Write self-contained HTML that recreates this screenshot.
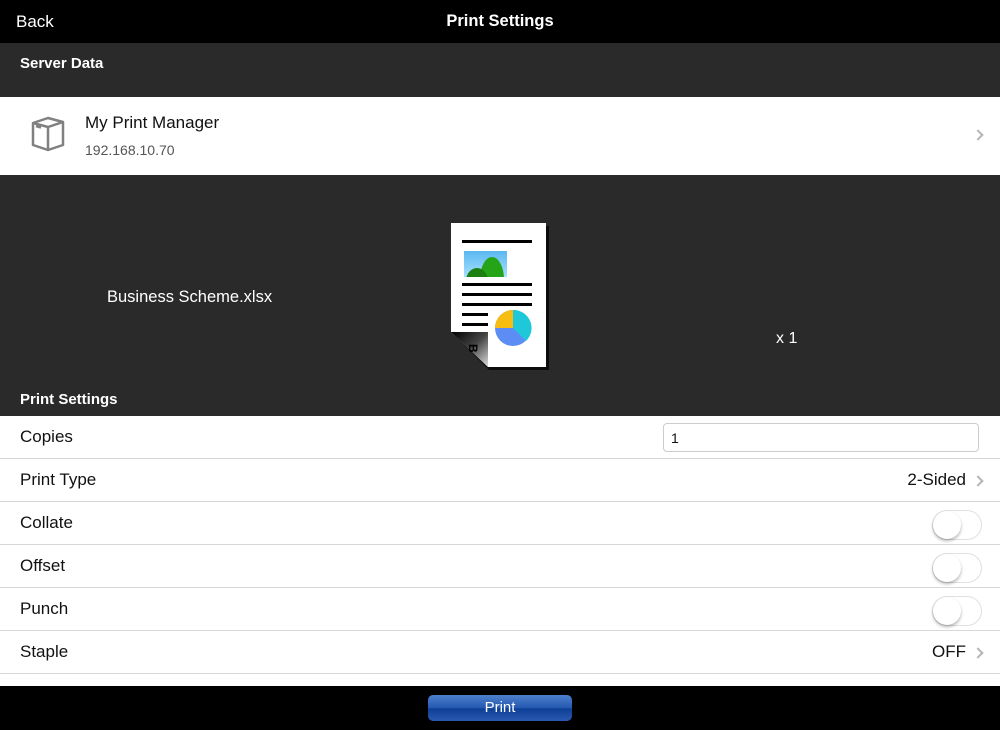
<!DOCTYPE html>
<html><head><style>
*{margin:0;padding:0;box-sizing:border-box}
body{width:1000px;height:730px;overflow:hidden;font-family:"Liberation Sans",sans-serif;background:#282828;position:relative}
.abs{position:absolute}
.top{left:0;top:0;width:1000px;height:43px;background:#000;color:#fff}
.dark{background:#2a2a2a}
.row{position:absolute;left:0;width:1000px;height:43px;background:#fff;border-bottom:1px solid #d8d8d8;font-size:17px;color:#111}
.row .l{position:absolute;left:20px;top:11px}
.tog{position:absolute;right:18px;top:8px;width:50px;height:30px;border:1px solid #e0e0e0;border-radius:15px;background:#fff}
.tog:after{content:"";position:absolute;left:0;top:0;width:28px;height:28px;border-radius:50%;background:#fff;box-shadow:0 2px 3px rgba(0,0,0,.3)}
.chev{position:absolute;width:8px;height:8px;border-right:2px solid #b5b5b5;border-top:2px solid #b5b5b5;transform:rotate(45deg)}
</style></head><body>
<div class="abs top"><div class="abs" style="left:16px;top:12px;font-size:17px">Back</div><div class="abs" style="left:0;width:1000px;top:12px;text-align:center;font-size:16.5px;font-weight:bold">Print Settings</div></div>
<div class="abs dark" style="left:0;top:43px;width:1000px;height:54px"><div class="abs" style="left:20px;top:12px;color:#fff;font-weight:bold;font-size:15px">Server Data</div></div>
<div class="abs" style="left:0;top:97px;width:1000px;height:78px;background:#fff">
<svg class="abs" style="left:30px;top:18px" width="36" height="38" viewBox="0 0 36 38"><g fill="none" stroke="#808080" stroke-width="2.5" stroke-linejoin="round"><path d="M3 8 L18 3 L33 7 L33 30 L18 35 L3 30 Z"/><path d="M3 8 L18 12 L33 7 M18 12 L18 35"/><path d="M6 11 L11 12.5"/></g></svg>
<div class="abs" style="left:85px;top:16px;font-size:17px;color:#111">My Print Manager</div>
<div class="abs" style="left:85px;top:45px;font-size:14px;color:#555">192.168.10.70</div>
<div class="chev" style="left:974px;top:34px"></div></div>
<div class="abs dark" style="left:0;top:175px;width:1000px;height:241px">
<div class="abs" style="left:107px;top:113px;color:#fff;font-size:16.5px">Business Scheme.xlsx</div>
<div class="abs" style="left:776px;top:155px;color:#fff;font-size:16px">x 1</div>
<svg class="abs" style="left:448px;top:46px" width="104" height="150" viewBox="0 0 104 150">
<defs><linearGradient id="f" x1="0" y1="0" x2="1" y2="1"><stop offset="0" stop-color="#000"/><stop offset=".5" stop-color="#444"/><stop offset="1" stop-color="#ddd"/></linearGradient>
<linearGradient id="s" x1="0" y1="0" x2="0" y2="1"><stop offset="0" stop-color="#5ab8f0"/><stop offset="1" stop-color="#a8e0ff"/></linearGradient>
<clipPath id="c"><rect x="16" y="30" width="43" height="26"/></clipPath></defs>
<path d="M6 5 L101 5 L101 149 L41 149 L6 114 Z" fill="#000" opacity=".7"/>
<path d="M3 2 L98 2 L98 146 L40 146 L3 111 Z" fill="#fff"/>
<path d="M3 111 L40 111 L40 146 Z" fill="url(#f)"/>
<rect x="14" y="19" width="70" height="3" fill="#000"/>
<rect x="16" y="30" width="43" height="26" fill="url(#s)"/>
<g clip-path="url(#c)"><ellipse cx="44" cy="58" rx="12" ry="22" fill="#26a418"/><ellipse cx="29" cy="60" rx="11" ry="13" fill="#1c8010"/></g>
<rect x="14" y="62" width="70" height="3" fill="#000"/><rect x="14" y="72" width="70" height="3" fill="#000"/><rect x="14" y="82" width="70" height="3" fill="#000"/>
<rect x="14" y="92" width="26" height="3" fill="#000"/><rect x="14" y="102" width="26" height="3" fill="#000"/>
<circle cx="65" cy="107" r="18" fill="#5b8df5"/><path d="M65 107 L65 89 A18 18 0 0 1 78 120 Z" fill="#1ec8d8"/><path d="M65 107 L47 107 A18 18 0 0 1 65 89 Z" fill="#f7bd10"/>
<text x="20" y="132" font-size="12" font-weight="bold" font-family="Liberation Sans" fill="#000" transform="rotate(90 25 128)">B</text>
</svg>
<div class="abs" style="left:20px;top:216px;color:#fff;font-weight:bold;font-size:15px">Print Settings</div></div>
<div class="abs" style="left:0;top:416px;width:1000px;height:270px;background:#fff"></div>
<div class="row" style="top:416px"><span class="l">Copies</span><div class="abs" style="left:663px;top:7px;width:316px;height:29px;border:1px solid #ccc;border-radius:4px;font-size:14px;padding:6px 7px">1</div></div>
<div class="row" style="top:459px"><span class="l">Print Type</span><span class="abs" style="right:34px;top:11px">2-Sided</span><div class="chev" style="left:974px;top:18px"></div></div>
<div class="row" style="top:502px"><span class="l">Collate</span><div class="tog"></div></div>
<div class="row" style="top:545px"><span class="l">Offset</span><div class="tog"></div></div>
<div class="row" style="top:588px"><span class="l">Punch</span><div class="tog"></div></div>
<div class="row" style="top:631px"><span class="l">Staple</span><span class="abs" style="right:34px;top:11px">OFF</span><div class="chev" style="left:974px;top:18px"></div></div>
<div class="abs" style="left:0;top:686px;width:1000px;height:44px;background:#000">
<div class="abs" style="left:428px;top:9px;width:144px;height:26px;border-radius:5px;background:linear-gradient(#4d80cc,#2458b0 50%,#0e3f96 52%,#2a5ab0);color:#fff;text-align:center;font-size:15px;line-height:26px">Print</div></div>
</body></html>
